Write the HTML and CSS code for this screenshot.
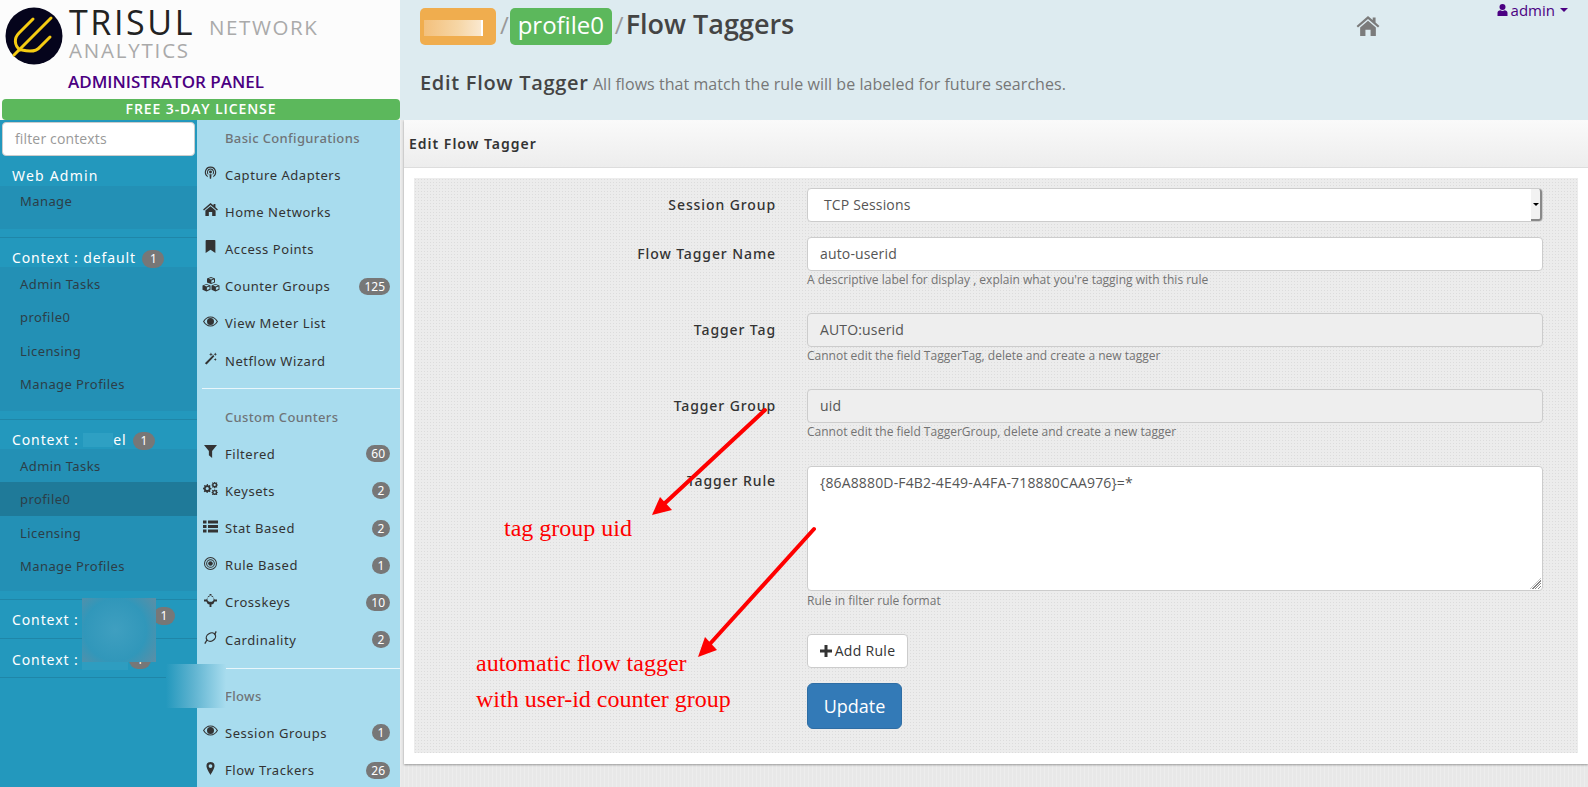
FILE: index.html
```html
<!DOCTYPE html>
<html lang="en">
<head>
<meta charset="utf-8">
<title>Flow Taggers</title>
<link rel="stylesheet" href="styles.css">
</head>
<body>
<svg class="sprite" width="0" height="0" aria-hidden="true">
  <symbol id="i-podcast" viewBox="0 0 16 16"><path d="M8 .5a7 7 0 0 0-3.200 13.200l-.2-1.500a5.600 5.600 0 1 1 6.800 0l-.2 1.500A7 7 0 0 0 8 .5z"/><path d="M8 3a4.500 4.500 0 0 0-2.800 8l.1-1.500a3.200 3.200 0 1 1 5.400 0l.1 1.500A4.500 4.500 0 0 0 8 3z"/><circle cx="8" cy="7.400" r="1.800"/><path d="M6.700 10h2.600l-.5 5.600H7.200z"/></symbol>
  <symbol id="i-home" viewBox="0 0 16 14"><path d="M8 0 0 7l1 1.100 7-6 7 6 1-1.100-2.700-2.400V1h-2v1.800z"/><path d="M8 3.400 2.500 8.100V14h3.700V9.700h3.600V14h3.700V8.100z"/></symbol>
  <symbol id="i-bookmark" viewBox="0 0 12 16"><path d="M1 0h10a1 1 0 0 1 1 1v15l-6-4-6 4V1a1 1 0 0 1 1-1z"/></symbol>
  <symbol id="i-cubes" viewBox="0 0 18 15"><path d="M9 0l4 1.500v4l-4 1.600-4-1.600v-4z"/><path d="M4.500 7 8.500 8.500v4.300l-4 1.700-4-1.700V8.500zM13.500 7l4 1.500v4.300l-4 1.700-4-1.700V8.500z"/><path fill="#a8dcee" d="M9.400 3.600v2.300l2.600-1V2.600zM4.900 10.600v2.500l2.600-1V9.600zM13.900 10.600v2.500l2.600-1V9.600zM2 8.500l2.500.9L7 8.500l-2.500-.8zM11 8.500l2.500.9 2.500-.9-2.500-.8zM6.700 1.800 9 2.600l2.300-.8L9 1z"/></symbol>
  <symbol id="i-eye" viewBox="0 0 18 12"><path fill-rule="evenodd" d="M9 0C5 0 2 2.500 0 6c2 3.500 5 6 9 6s7-2.500 9-6c-2-3.500-5-6-9-6zm0 1.200c3 0 5.800 1.900 7.500 4.800C14.800 8.900 12 10.800 9 10.800S3.200 8.900 1.500 6C3.200 3.100 6 1.200 9 1.200z"/><path d="M9 1.800a4.200 4.200 0 1 0 0 8.400 4.200 4.200 0 0 0 0-8.400z"/></symbol>
  <symbol id="i-magic" viewBox="0 0 15 15"><path d="M10.500 3.500 12 5 3 14.500 1 13zM8 .5l.8 1.700 1.700.4-1.700.6L8 5l-.7-1.800-1.700-.6 1.700-.4zM13 .5l.6 1.400 1.400.6-1.400.6-.6 1.400-.6-1.400-1.400-.6 1.400-.6zM13 7l.5 1.200 1.200.5-1.200.5-.5 1.200-.5-1.200-1.200-.5 1.200-.5z"/></symbol>
  <symbol id="i-filter" viewBox="0 0 12 12"><path d="M0 0h12L7.500 5.500V12l-3-2.500V5.500z"/></symbol>
  <symbol id="i-cogs" viewBox="0 0 16 14"><path fill-rule="evenodd" d="M5.200 3.500l1 .3.900-.6 1 1-.6.900.3 1 1.200.3v1.400l-1.200.3-.3 1 .6.900-1 1-.9-.6-1 .3-.3 1.200H3.900l-.3-1.200-1-.3-.9.600-1-1 .6-.9-.3-1L0 7.700V6.300l1.200-.3.3-1-.6-.9 1-1 .9.600 1-.3.300-1.200h1.100zM4.500 5.300a1.700 1.700 0 1 0 0 3.400 1.700 1.700 0 0 0 0-3.400z"/><path fill-rule="evenodd" d="M13 0l.3.800.8.100.6-.5.700.7-.5.600.1.800.800.300v1l-.8.300-.1.800.5.600-.7.700-.6-.5-.8.100-.3.800h-1l-.3-.8-.8-.1-.6.500-.7-.7.500-.6-.1-.8-.8-.3v-1l.8-.3.1-.8-.5-.6.700-.7.600.5.800-.1.300-.8zm-.5 2a1.200 1.200 0 1 0 0 2.400 1.200 1.200 0 0 0 0-2.400zM13 8l.3.800.8.100.6-.5.700.7-.5.600.1.800.800.300v1l-.8.300-.1.800.5.600-.7.700-.6-.5-.8.100-.3.200h-1l-.3-.2-.8-.1-.6.500-.7-.7.500-.6-.1-.8-.8-.3v-1l.8-.3.1-.8-.5-.6.700-.7.600.5.800-.1.300-.8zm-.5 2a1.200 1.200 0 1 0 0 2.400 1.200 1.200 0 0 0 0-2.400z"/></symbol>
  <symbol id="i-list" viewBox="0 0 15 12"><path d="M0 0h3.500v3H0zM5 0h10v3H5zM0 4.500h3.500v3H0zM5 4.500h10v3H5zM0 9h3.500v3H0zM5 9h10v3H5z"/></symbol>
  <symbol id="i-target" viewBox="0 0 14 14"><path fill-rule="evenodd" d="M7 0a7 7 0 1 0 0 14A7 7 0 0 0 7 0zm0 1.100a5.900 5.900 0 1 1 0 11.800A5.900 5.900 0 0 1 7 1.100z"/><path fill-rule="evenodd" d="M7 2.300a4.700 4.700 0 1 0 0 9.400 4.700 4.700 0 0 0 0-9.400zm0 1.100a3.600 3.600 0 1 1 0 7.200 3.600 3.600 0 0 1 0-7.200z"/><circle cx="7" cy="7" r="2.500"/></symbol>
  <symbol id="i-cross" viewBox="0 0 14 14"><path fill-rule="evenodd" d="M6 0h2v2.600A4.500 4.500 0 0 1 11.400 6H14v2h-2.600A4.500 4.500 0 0 1 8 11.400V14H6v-2.600A4.500 4.500 0 0 1 2.600 8H0V6h2.600A4.500 4.500 0 0 1 6 2.600zm1 1.600a3.400 3.400 0 1 0 0 6.800 3.400 3.400 0 0 0 0-6.800z"/></symbol>
  <symbol id="i-card" viewBox="0 0 16 16"><g fill="none" stroke="#333" stroke-width="1.600"><ellipse cx="8.500" cy="7.500" rx="6" ry="4.800" transform="rotate(-30 8.500 7.500)"/><path d="M1 15.500 3.800 10.800M15 .5 13 4.500"/></g></symbol>
  <symbol id="i-marker" viewBox="0 0 10 16"><path fill-rule="evenodd" d="M5 0a5 5 0 0 1 5 5c0 2.500-3 7.500-5 11C3 12.500 0 7.500 0 5a5 5 0 0 1 5-5zm0 2.700a2.300 2.300 0 1 0 0 4.600 2.300 2.300 0 0 0 0-4.600z"/></symbol>
  <symbol id="i-user" viewBox="0 0 10 12"><circle cx="5" cy="3" r="3"/><path d="M0 12V8.800C0 7.200 1.300 6.200 3 6.200c.6.500 1.300.8 2 .8s1.400-.3 2-.8c1.700 0 3 1 3 2.600V12z"/></symbol>
  <symbol id="i-plus" viewBox="0 0 12 12"><path d="M4.500 0h3v4.500H12v3H7.500V12h-3V7.500H0v-3h4.500z"/></symbol>
</svg>

<div class="app">
  <aside class="side">
    <div class="brand">
      <svg class="logo" viewBox="0 0 58 58" aria-hidden="true">
        <circle cx="29" cy="29" r="28.500" fill="#05041c"/>
        <g fill="none" stroke="#f6cc12" stroke-width="3" stroke-linecap="round">
          <path d="M9 48 46 11"/>
          <path d="M28 12 14 26c-5 5-5 12 1 17"/>
          <path d="M45 30 35 40c-4 5-10 5-18 3"/>
        </g>
      </svg>
      <div class="brand-text">
        <div class="brand-line"><span class="brand-name">TRISUL</span><span class="brand-net">NETWORK</span></div>
        <div class="brand-ana">ANALYTICS</div>
      </div>
      <div class="brand-panel">ADMINISTRATOR PANEL</div>
    </div>
    <div class="license">FREE 3-DAY LICENSE</div>
    <div class="cols">
      <nav class="ctx">
        <div class="filter-wrap"><div class="filter">filter contexts</div></div>
        <h4 class="ctx-head ctx-head-first">Web Admin</h4>
        <ul class="sub sub-web"><li>Manage</li></ul>
        <h4 class="ctx-head ctx-ruled">Context : default <b class="pill">1</b></h4>
        <ul class="sub">
          <li>Admin Tasks</li><li>profile0</li><li>Licensing</li><li>Manage Profiles</li>
        </ul>
        <h4 class="ctx-head ctx-ruled">Context : <span class="redact-inline"></span>el <b class="pill">1</b></h4>
        <ul class="sub sub-tight">
          <li>Admin Tasks</li><li class="on">profile0</li><li>Licensing</li><li>Manage Profiles</li>
        </ul>
        <h4 class="ctx-row ctx-row-a">Context : <b class="pill pill-a">1</b></h4>
        <h4 class="ctx-row ctx-row-b">Context : <b class="pill pill-b">1</b></h4>
      </nav>
      <nav class="tools">
        <h5 class="tools-head">Basic Configurations</h5>
        <a class="tool"><svg class="ic"><use href="#i-podcast"/></svg>Capture Adapters</a>
        <a class="tool"><svg class="ic"><use href="#i-home"/></svg>Home Networks</a>
        <a class="tool"><svg class="ic"><use href="#i-bookmark"/></svg>Access Points</a>
        <a class="tool"><svg class="ic ic-wide"><use href="#i-cubes"/></svg>Counter Groups<b class="count">125</b></a>
        <a class="tool"><svg class="ic"><use href="#i-eye"/></svg>View Meter List</a>
        <a class="tool"><svg class="ic"><use href="#i-magic"/></svg>Netflow Wizard</a>
        <hr class="rule">
        <h5 class="tools-head">Custom Counters</h5>
        <a class="tool"><svg class="ic"><use href="#i-filter"/></svg>Filtered<b class="count">60</b></a>
        <a class="tool"><svg class="ic"><use href="#i-cogs"/></svg>Keysets<b class="count">2</b></a>
        <a class="tool"><svg class="ic"><use href="#i-list"/></svg>Stat Based<b class="count">2</b></a>
        <a class="tool"><svg class="ic"><use href="#i-target"/></svg>Rule Based<b class="count">1</b></a>
        <a class="tool"><svg class="ic"><use href="#i-cross"/></svg>Crosskeys<b class="count">10</b></a>
        <a class="tool"><svg class="ic"><use href="#i-card"/></svg>Cardinality<b class="count">2</b></a>
        <hr class="rule rule-short">
        <h5 class="tools-head">Flows</h5>
        <a class="tool"><svg class="ic"><use href="#i-eye"/></svg>Session Groups<b class="count">1</b></a>
        <a class="tool"><svg class="ic"><use href="#i-marker"/></svg>Flow Trackers<b class="count">26</b></a>
      </nav>
    </div>
    <div class="blur blur-a"></div>
    <div class="blur blur-a2"></div>
    <div class="blur blur-b"></div>
  </aside>

  <main class="main">
    <header class="top">
      <div class="crumbs">
        <span class="chip chip-orange"><span class="chip-blur"></span></span>
        <span class="slash">/</span>
        <span class="chip chip-green">profile0</span>
        <span class="slash slash-tight">/</span>
        <h1 class="title">Flow Taggers</h1>
        <svg class="home"><use href="#i-home"/></svg>
        <div class="user"><svg class="user-ic"><use href="#i-user"/></svg>admin<i class="caret"></i></div>
      </div>
      <div class="subtitle"><strong>Edit Flow Tagger</strong> All flows that match the rule will be labeled for future searches.</div>
    </header>

    <section class="panel">
      <div class="panel-head">Edit Flow Tagger</div>
      <div class="panel-body">
        <form class="form">
          <div class="row row-select">
            <label class="lab">Session Group</label>
            <div class="field"><div class="select">TCP Sessions<span class="spin"><i></i></span></div></div>
          </div>
          <div class="row">
            <label class="lab">Flow Tagger Name</label>
            <div class="field"><div class="input">auto-userid</div><p class="help">A descriptive label for display , explain what you're tagging with this rule</p></div>
          </div>
          <div class="row">
            <label class="lab">Tagger Tag</label>
            <div class="field"><div class="input off">AUTO:userid</div><p class="help">Cannot edit the field TaggerTag, delete and create a new tagger</p></div>
          </div>
          <div class="row">
            <label class="lab">Tagger Group</label>
            <div class="field"><div class="input off">uid</div><p class="help">Cannot edit the field TaggerGroup, delete and create a new tagger</p></div>
          </div>
          <div class="row row-rule">
            <label class="lab">Tagger Rule</label>
            <div class="field"><div class="input area">{86A8880D-F4B2-4E49-A4FA-718880CAA976}=*<span class="grip"></span></div><p class="help">Rule in filter rule format</p></div>
          </div>
          <div class="row row-btn">
            <span class="lab"></span>
            <div class="field"><button type="button" class="btn-add"><svg class="plus"><use href="#i-plus"/></svg>Add Rule</button></div>
          </div>
          <div class="row">
            <span class="lab"></span>
            <div class="field"><button type="button" class="btn-update">Update</button></div>
          </div>
        </form>
        <div class="note note-a">tag group uid</div>
        <div class="note note-b">automatic flow tagger</div>
        <div class="note note-c">with user-id counter group</div>
      </div>
    </section>
  </main>
</div>

<svg class="arrows" viewBox="0 0 1588 787" aria-hidden="true">
  <g stroke="#fe0000" stroke-width="4" stroke-linecap="round">
    <path d="M765 410 664 504"/>
    <path d="M814 529 708 646"/>
  </g>
  <path fill="#fe0000" d="M652 515 660 497 672 510z"/>
  <path fill="#fe0000" d="M698 657 705 637 717 650z"/>
</svg>
</body>
</html>
```

FILE: styles.css
```css
* { box-sizing: border-box; }
html, body { margin: 0; height: 787px; overflow: hidden; }
body {
  font-family: "Open Sans", "Noto Sans", sans-serif;
  color: #333;
  position: relative;
  background-color: #e8e8e8;
}
.sprite { position: absolute; }
ul { list-style: none; margin: 0; padding: 0; }
h1, h4, h5, p { margin: 0; font-weight: normal; }

.app { display: flex; height: 787px; }

/* left */
.side { width: 400px; flex: none; position: relative; background: #fcfcfc; overflow: hidden; }
.brand { height: 99px; position: relative; padding: 7px 0 0 5px; display: flex; flex-wrap: wrap; align-items: flex-start; }
.logo { width: 58px; height: 58px; flex: none; }
.brand-text { margin-left: 6px; margin-top: -4px; }
.brand-line { display: flex; align-items: baseline; height: 38px; }
.brand-name { font-size: 34px; line-height: 38px; letter-spacing: 2.600px; color: #222; }
.brand-net { font-size: 20.500px; line-height: 24px; letter-spacing: 1.600px; color: #aaa; margin-left: 14px; }
.brand-ana { font-size: 20.500px; line-height: 20px; letter-spacing: 1.800px; color: #aaa; margin-top: -1px; }
.brand-panel { flex-basis: 100%; padding-left: 63px; margin-top: -1px; font-size: 17px; line-height: 20px; color: #4b0082; font-weight: 600; }
.license { height: 21px; margin-left: 2px; background: #5cb85c; border-radius: 4px; color: #fff; text-align: center; font-size: 14px; line-height: 20px; font-weight: 600; letter-spacing: .9px; }
.cols { display: flex; height: 667px; }

.ctx { width: 197px; flex: none; background: #2398bd; }
.filter-wrap { padding: 2px 2px 0; }
.filter { height: 34px; width: 193px; background: #fff; border: 1px solid #ccc; border-radius: 4px; padding: 0 12px; font-size: 14px; line-height: 32px; color: #999; letter-spacing: .15px; }
.ctx-head, .ctx-row { color: #fff; font-size: 14px; letter-spacing: .9px; font-family: "Noto Sans", "Open Sans", sans-serif; }
.ctx-head { height: 30px; line-height: 30px; padding-left: 12px; }
.ctx-head-first { line-height: 40px; letter-spacing: 1.200px; }
.ctx-ruled { border-top: 1px solid #1f86a8; margin-top: 8px; padding-top: 4px; line-height: 32px; height: 30px; }
.sub { background: #2390b5; font-size: 13px; letter-spacing: .42px; font-family: "Noto Sans", "Open Sans", sans-serif; height: 144px; }
.sub li { height: 33.300px; line-height: 35px; padding-left: 20px; color: #2c3e48; }
.sub-web { height: 43px; }
.sub-web li { line-height: 30px; }
.sub-tight { height: 142px; }
.sub .on { background: #1f7a99; }
.pill { display: inline-block; min-width: 22px; height: 18px; border-radius: 9px; background: #777; color: #fff; font-size: 12px; line-height: 18px; font-weight: 400; text-align: center; letter-spacing: 0; margin-left: 2px; }
.redact-inline { display: inline-block; width: 30px; height: 14px; margin: 0 0 -2px; background: #2ea0c3; }
.ctx-row { height: 39px; line-height: 40px; padding-left: 12px; border-top: 1px solid #1f86a8; position: relative; }
.ctx-row-a { margin-top: 8px; }
.ctx-row-b { border-bottom: 1px solid #1f86a8; height: 40px; line-height: 42px; }
.pill-a { position: absolute; left: 151px; top: 7px; }
.pill-b { position: absolute; left: 127px; top: 12px; }

.tools { flex: 1; background: #a8dcee; font-family: "Noto Sans", "Open Sans", sans-serif; font-size: 13px; letter-spacing: .55px; padding-top: 1px; overflow: hidden; }
.tools-head { height: 35px; line-height: 34px; padding-left: 28px; font-size: 13px; font-weight: 500; color: #6f7478; letter-spacing: .35px; }
.tool { display: flex; align-items: center; height: 37.200px; padding: 0 10px 0 6px; color: #333; }
.ic { width: 15px; height: 13px; fill: #333; margin-right: 7px; flex: none; position: relative; top: -2px; }
.ic-wide { width: 18px; height: 15px; margin-right: 5px; margin-left: -1px; }
.count { margin-left: auto; min-width: 18px; height: 17px; padding: 0 5px; border-radius: 9px; background: #777; color: #fff; font-size: 12px; line-height: 17px; font-weight: 400; text-align: center; letter-spacing: 0; }
.rule { border: 0; border-top: 1px solid #e8f6fb; margin: 9px 0 11px 5px; }
.rule-short { margin-left: 29px; margin-top: 10px; margin-bottom: 10px; }

.blur { position: absolute; pointer-events: none; }
.blur-a { left: 82px; top: 598px; width: 74px; height: 64px; background: radial-gradient(circle at 45% 50%, #3f9fc0 0%, #3197ba 60%, #5d8ea5 100%); }
.blur-a2 { left: 82px; top: 662px; width: 46px; height: 8px; background: #2e9dc0; }
.blur-b { left: 166px; top: 664px; width: 60px; height: 44px; background: linear-gradient(90deg, #2398bd 0%, #5eb3d0 45%, #a8dcee 100%); }

/* main */
.main { flex: 1; min-width: 0; display: flex; flex-direction: column; background-image: repeating-linear-gradient(90deg, rgba(255,255,255,.22) 0 1px, transparent 1px 4px); }
.top { height: 120px; background: #ddebf0; padding: 8px 0 0 20px; position: relative; flex: none; }
.crumbs { display: flex; align-items: flex-start; height: 37px; }
.chip { display: block; height: 37px; border-radius: 5px; color: #fff; font-size: 24px; line-height: 34px; text-align: center; }
.chip-orange { width: 76px; background: #f0ad4e; position: relative; }
.chip-blur { position: absolute; left: 4px; top: 12px; width: 59px; height: 16px; background: linear-gradient(90deg, #f3c07c, #f6d6a6 60%, #fae8cf); border-right: 2px solid #fff; }
.chip-green { width: 102px; background: #5cb85c; }
.slash { font-size: 24px; line-height: 34px; color: #999; margin: 0 1px 0 4px; }
.slash-tight { margin: 0 2px 0 3px; }
.title { font-size: 27px; line-height: 32px; font-weight: 600; color: #444; }
.home { position: absolute; left: 956px; top: 16px; width: 24px; height: 20px; fill: #7b7b7b; }
.user { position: absolute; right: 20px; top: 1px; font-size: 15px; line-height: 18px; color: #4b0082; display: flex; align-items: center; }
.user-ic { width: 11px; height: 12px; fill: #4b0082; margin-right: 3px; }
.caret { width: 0; height: 0; border: 4px solid transparent; border-top-color: #4b0082; border-bottom: 0; margin-left: 5px; }
.subtitle { margin-top: 24px; font-size: 16px; line-height: 28px; color: #777; letter-spacing: .05px; }
.subtitle strong { font-size: 20px; font-weight: 600; color: #444; letter-spacing: .7px; }

.panel { margin-left: 4px; height: 644px; background: #fff; box-shadow: 0 1px 2px rgba(0,0,0,.35); flex: none; display: flex; flex-direction: column; }
.panel-head { height: 48px; flex: none; padding-left: 5px; line-height: 48px; font-size: 14px; font-weight: 600; letter-spacing: 1px; color: #333; background: linear-gradient(#fafafa, #ededed); border-bottom: 1px solid #ddd; font-family: "Noto Sans", "Open Sans", sans-serif; }
.panel-body { position: relative; margin: 10px 10px 0; height: 575px; background-color: #ececec; background-image: radial-gradient(circle, #dcdcdc .8px, transparent 1px); background-size: 3px 3px; }
.form { padding-top: 10px; }
.row { display: flex; }
.row + .row { margin-top: 15px; }
.row-rule { margin-top: 16px !important; }
.row-rule .lab { line-height: 30px; }
.row-btn { margin-top: 15px !important; }
.lab { width: 362px; flex: none; text-align: right; font-size: 14px; line-height: 34px; font-weight: 500; letter-spacing: .9px; color: #333; font-family: "Noto Sans", "Open Sans", sans-serif; }
.field { margin-left: 31px; width: 736px; flex: none; }
.input, .select { height: 34px; border: 1px solid #ccc; border-radius: 4px; background: #fff; padding: 0 12px; font-size: 14px; line-height: 32px; color: #555; position: relative; letter-spacing: .15px; }
.select { padding-left: 16px; }
.spin { position: absolute; right: 0; top: 0; width: 11px; height: 32px; background: #f2f2f2; border-right: 2px solid #888; border-bottom: 2px solid #888; border-radius: 0 3px 3px 0; }
.spin i { position: absolute; left: 2px; top: 14px; border: 3px solid transparent; border-top-color: #000; border-bottom: 0; }
.off { background: #eee; color: #555; }
.area { height: 125px; line-height: 20px; padding-top: 6px; }
.grip { position: absolute; right: 1px; bottom: 1px; width: 11px; height: 11px; background: repeating-linear-gradient(135deg, transparent 0 1px, #888 1px 2px); clip-path: polygon(100% 0, 100% 100%, 0 100%); }
.help { margin-top: -1px; height: 28px; font-size: 12px; line-height: 20px; color: #737373; }
.row-rule .help { margin-top: 0; }
.btn-add { display: block; width: 101px; height: 34px; border: 1px solid #ccc; border-radius: 4px; background: #fff; font: 14px/32px "Open Sans", sans-serif; color: #333; padding: 0; letter-spacing: .3px; }
.plus { width: 12px; height: 12px; fill: #333; margin-right: 3px; position: relative; top: 1px; }
.btn-update { display: block; width: 95px; height: 46px; border: 1px solid #2e6da4; border-radius: 6px; background: #337ab7; color: #fff; font: 18px/44px "Open Sans", sans-serif; padding: 0; }
.note { position: absolute; color: #fe0000; font-family: "Liberation Serif", serif; font-size: 24px; line-height: 28px; }
.note-a { left: 90px; top: 336px; }
.note-b { left: 62px; top: 471px; }
.note-c { left: 62px; top: 507px; }
.arrows { position: absolute; left: 0; top: 0; width: 1588px; height: 787px; pointer-events: none; }
```
